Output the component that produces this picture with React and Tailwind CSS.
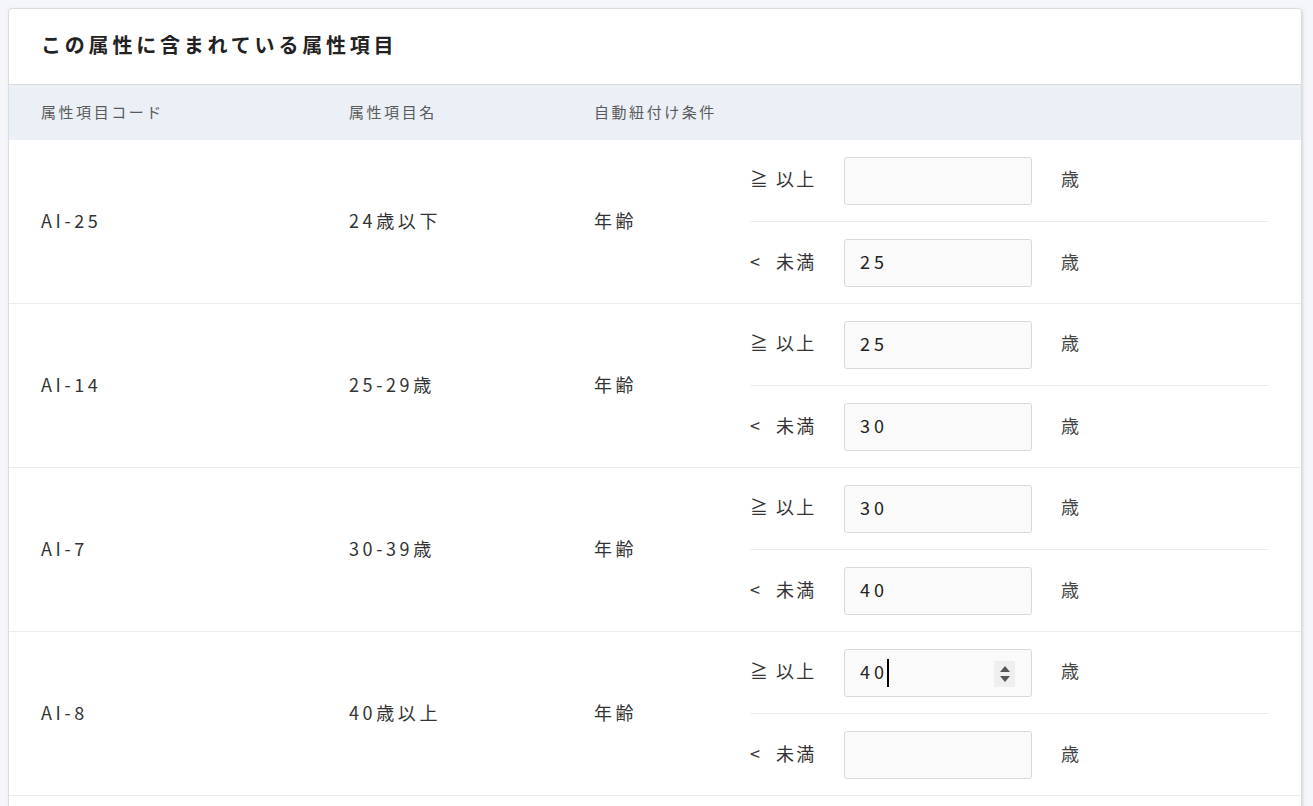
import React from "react";

const rows = [
  { code: "AI-25", name: "24歳以下", min: "", max: "25" },
  { code: "AI-14", name: "25-29歳", min: "25", max: "30" },
  { code: "AI-7", name: "30-39歳", min: "30", max: "40" },
  { code: "AI-8", name: "40歳以上", min: "40", max: "", focused: true },
];

const font = { fontFamily: '"Noto Sans CJK JP", "Noto Sans", sans-serif' };

function Spinner() {
  return (
    <div className="absolute right-[16px] top-[11px] flex h-[26px] w-[21px] flex-col items-center justify-center gap-[4px] bg-[#efefef]">
      <svg width="10" height="6" viewBox="0 0 10 6">
        <path d="M5 0 L10 6 L0 6 Z" fill="#555" />
      </svg>
      <svg width="10" height="6" viewBox="0 0 10 6">
        <path d="M0 0 L10 0 L5 6 Z" fill="#555" />
      </svg>
    </div>
  );
}

function AgeInput({ value, focused }) {
  return (
    <div className="relative flex h-[48px] w-[188px] items-center rounded-[3px] border border-[#d9d9d9] bg-[#fafafa] pl-[15px] text-[18px] text-[#222]">
      <span className="pb-[3px] tracking-[0.22em]">{value}</span>
      {focused && <span className="-ml-[1px] inline-block h-[28px] w-[2px] bg-black" />}
      {focused && <Spinner />}
    </div>
  );
}

function Bound({ op, label, value, focused, divider }) {
  return (
    <div className={`flex h-[82px] items-center ${divider ? "border-b border-[#ececec]" : ""}`}>
      <div className="flex w-[94px] items-center pb-[4px] text-[18px] text-[#333]">
        <span className="w-[26px]">{op}</span>
        <span className="tracking-[0.12em]">{label}</span>
      </div>
      <AgeInput value={value} focused={focused} />
      <span className="ml-[29px] pb-[4px] text-[18px] text-[#444]">歳</span>
    </div>
  );
}

export default function App() {
  return (
    <div className="h-[806px] overflow-hidden bg-[#f5f6fa] pl-[8px] pr-[11px] pt-[8px]" style={font}>
      <div className="rounded-[4px] border border-[#dcdcdc] bg-white shadow-[1px_1px_3px_rgba(0,0,0,0.12)]">
        <div className="flex h-[76px] items-center border-b border-[#d9d9d9] pb-[4px] pl-[32px]">
          <h2 className="text-[20px] font-bold tracking-[0.19em] text-[#222]">この属性に含まれている属性項目</h2>
        </div>
        <div className="grid h-[55px] grid-cols-[308px_245px_156px_1fr] items-center bg-[#ebeff6] text-[15px] tracking-[0.17em] text-[#5a5a5a]">
          <div className="pl-[32px]">属性項目コード</div>
          <div className="pl-[32px]">属性項目名</div>
          <div className="pl-[32px]">自動紐付け条件</div>
          <div />
        </div>
        {rows.map((r) => (
          <div
            key={r.code}
            className="grid h-[164px] grid-cols-[308px_245px_156px_1fr] border-b border-[#ececec] text-[18px] tracking-[0.2em] text-[#333]"
          >
            <div className="flex items-center pb-[4px] pl-[32px]">{r.code}</div>
            <div className="flex items-center pb-[4px] pl-[32px]">{r.name}</div>
            <div className="flex items-center pb-[4px] pl-[32px]">年齢</div>
            <div className="flex flex-col px-[32px] tracking-normal">
              <Bound op="≧" label="以上" value={r.min} focused={r.focused} divider />
              <Bound op="<" label="未満" value={r.max} />
            </div>
          </div>
        ))}
        <div className="h-[40px]" />
      </div>
    </div>
  );
}
